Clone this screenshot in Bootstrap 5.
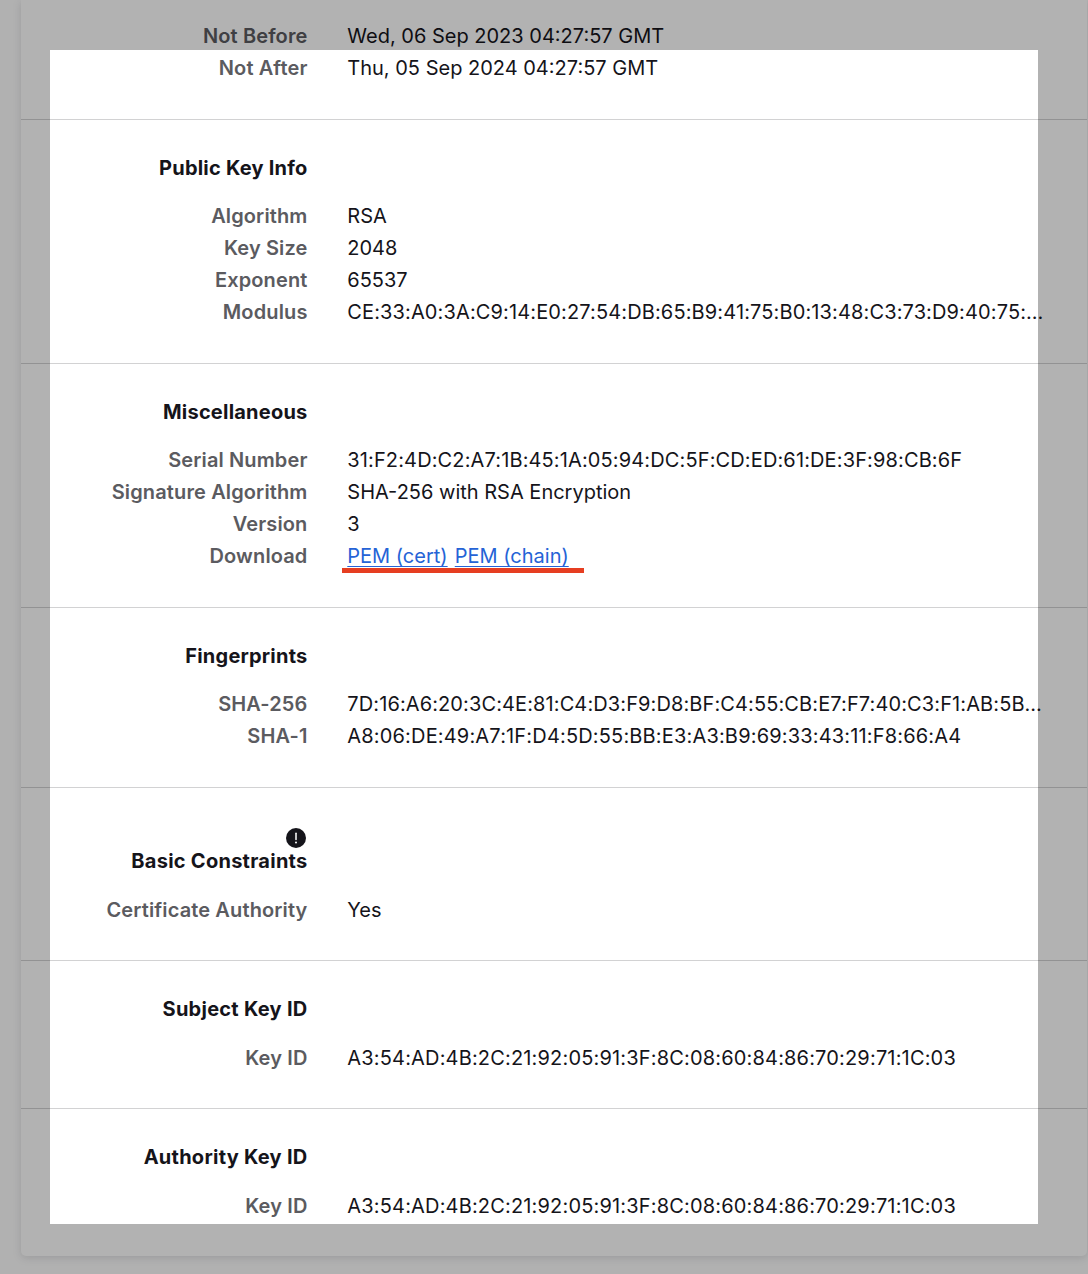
<!DOCTYPE html>
<html lang="en">
<head>
<meta charset="utf-8">
<title>Certificate</title>
<link href="https://cdn.jsdelivr.net/npm/bootstrap@5.3.0/dist/css/bootstrap.min.css" rel="stylesheet">
<style>
body{font-family:Inter,"Liberation Sans",sans-serif;font-size:20px;line-height:32px;color:#15141a;background:#fefefe;width:1088px;height:1274px}
.sheet{margin-left:21px;width:1066px;height:1256px;background:#fff;border-radius:0 0 5px 5px;box-shadow:0 2px 8px rgba(58,57,68,.16)}
.info-group{border-bottom:1px solid #d2d2d3;padding-top:32px;padding-bottom:35px}
.info-group:last-child{border:0}
.info-group.first{padding-top:20px}
.label-col{width:286.5px;flex:none;text-align:right;font-weight:600;color:#5b5b60;letter-spacing:.13px}
.value-col{margin-left:39.8px;white-space:nowrap}
.hex{letter-spacing:.13px}
.hex-tight{letter-spacing:.11px}
.hex-wide{letter-spacing:.17px}
.info-group h2{font-size:20px;line-height:32px;font-weight:700;width:286.5px;text-align:right;margin:0 0 16px;letter-spacing:.22px}
.key-id{padding-bottom:34px}
.info-group.key-id h2{margin-bottom:17px;letter-spacing:.26px}
.critical{width:286px;height:25px;padding:7.5px 1px 0 0;line-height:0}
.value-col a{color:#2563d6;text-decoration-thickness:1px;text-underline-offset:3px}
.value-col a+a{margin-left:1.5px}
.mark-line{left:342px;top:568px;width:242px;height:5px;background:#e63e21}
.spotlight{left:50px;top:50px;width:988px;height:1174px;box-shadow:0 0 0 60px rgba(0,0,0,.3);pointer-events:none}
</style>
<script src="https://cdn.jsdelivr.net/npm/bootstrap@5.3.0/dist/js/bootstrap.bundle.min.js"></script>
</head>
<body class="position-relative overflow-hidden">
<main class="sheet">
<section class="info-group first">
<div class="d-flex"><div class="label-col">Not Before</div><div class="value-col">Wed, 06 Sep 2023 04:27:57 GMT</div></div>
<div class="d-flex"><div class="label-col">Not After</div><div class="value-col">Thu, 05 Sep 2024 04:27:57 GMT</div></div>
</section>
<section class="info-group"><h2>Public Key Info</h2>
<div class="d-flex"><div class="label-col">Algorithm</div><div class="value-col">RSA</div></div>
<div class="d-flex"><div class="label-col">Key Size</div><div class="value-col">2048</div></div>
<div class="d-flex"><div class="label-col">Exponent</div><div class="value-col">65537</div></div>
<div class="d-flex"><div class="label-col">Modulus</div><div class="value-col hex">CE:33:A0:3A:C9:14:E0:27:54:DB:65:B9:41:75:B0:13:48:C3:73:D9:40:75:…</div></div>
</section>
<section class="info-group"><h2>Miscellaneous</h2>
<div class="d-flex"><div class="label-col">Serial Number</div><div class="value-col hex">31:F2:4D:C2:A7:1B:45:1A:05:94:DC:5F:CD:ED:61:DE:3F:98:CB:6F</div></div>
<div class="d-flex"><div class="label-col">Signature Algorithm</div><div class="value-col">SHA-256 with RSA Encryption</div></div>
<div class="d-flex"><div class="label-col">Version</div><div class="value-col">3</div></div>
<div class="d-flex"><div class="label-col">Download</div><div class="value-col"><a href="#">PEM (cert)</a> <a href="#">PEM (chain)</a></div></div>
</section>
<section class="info-group"><h2>Fingerprints</h2>
<div class="d-flex"><div class="label-col">SHA-256</div><div class="value-col hex-tight">7D:16:A6:20:3C:4E:81:C4:D3:F9:D8:BF:C4:55:CB:E7:F7:40:C3:F1:AB:5B…</div></div>
<div class="d-flex"><div class="label-col">SHA-1</div><div class="value-col hex-wide">A8:06:DE:49:A7:1F:D4:5D:55:BB:E3:A3:B9:69:33:43:11:F8:66:A4</div></div>
</section>
<section class="info-group key-id">
<div class="critical text-end"><svg width="20" height="20" viewBox="0 0 20 20" aria-hidden="true"><circle cx="10" cy="10" r="10" fill="#15141a"/><path d="M10 5.2v6.3" stroke="#fff" stroke-width="1.5" stroke-linecap="round"/><circle cx="10" cy="14.5" r="1" fill="#fff"/></svg></div>
<h2>Basic Constraints</h2>
<div class="d-flex"><div class="label-col">Certificate Authority</div><div class="value-col">Yes</div></div>
</section>
<section class="info-group key-id"><h2>Subject Key ID</h2>
<div class="d-flex"><div class="label-col">Key ID</div><div class="value-col hex-wide">A3:54:AD:4B:2C:21:92:05:91:3F:8C:08:60:84:86:70:29:71:1C:03</div></div>
</section>
<section class="info-group key-id"><h2>Authority Key ID</h2>
<div class="d-flex"><div class="label-col">Key ID</div><div class="value-col hex-wide">A3:54:AD:4B:2C:21:92:05:91:3F:8C:08:60:84:86:70:29:71:1C:03</div></div>
</section>
</main>
<div class="mark-line position-absolute"></div>
<div class="spotlight position-absolute"></div>
</body>
</html>
